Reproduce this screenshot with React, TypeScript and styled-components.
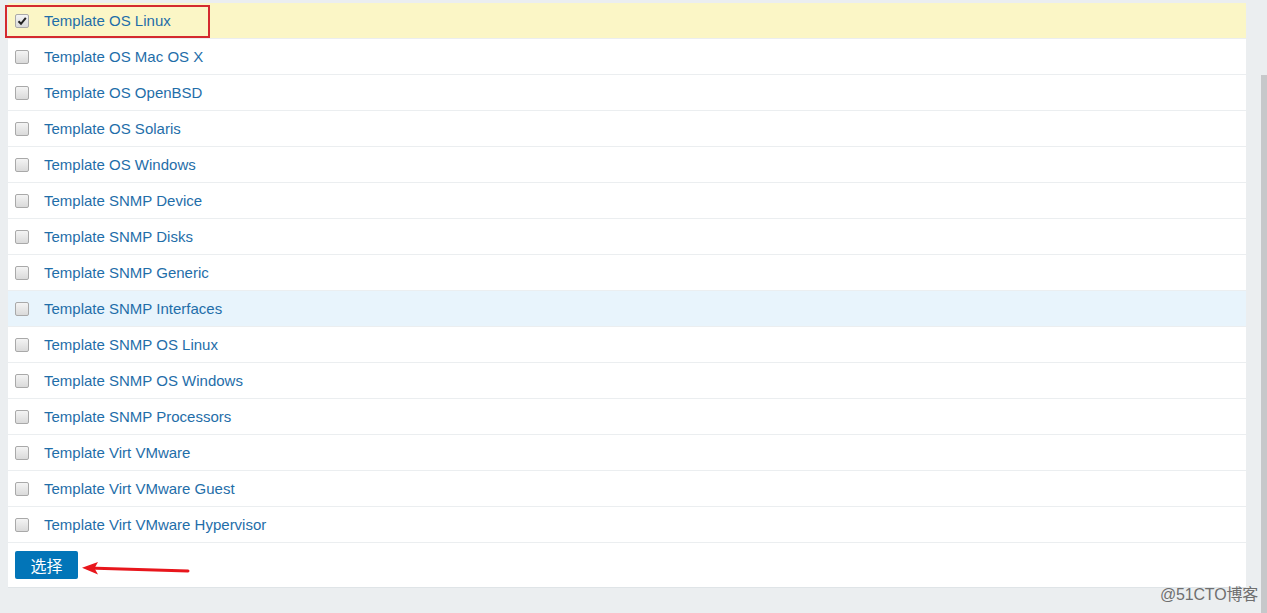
import React from "react";
import styled, { createGlobalStyle } from "styled-components";

const Global = createGlobalStyle`
  html, body { margin: 0; padding: 0; background: #ebeef0; }
  body { font-family: Arial, "Liberation Sans", "Noto Sans CJK SC", sans-serif; }
  #root { width: 1267px; height: 613px; overflow: hidden; }
`;

const Page = styled.div`
  display: flex;
  width: 1267px;
  height: 613px;
  background: #ebeef0;
  position: relative;
`;

const Main = styled.div`
  flex: 1;
  padding: 3px 0 0 8px;
`;

const Panel = styled.div`
  width: 1238px;
  background: #fff;
  border-bottom: 1px solid #dfe4e7;
`;

const Row = styled.div<{ $tone?: "selected" | "hover" }>`
  height: 35px;
  display: flex;
  align-items: center;
  border-bottom: 1px solid #ebeef0;
  background: ${(p) =>
    p.$tone === "selected" ? "#fbf6c6" : p.$tone === "hover" ? "#e8f4fc" : "#fff"};
  position: relative;
`;

const Box = styled.span<{ $checked?: boolean }>`
  width: 12px;
  height: 12px;
  margin-left: 7px;
  border: 1px solid #a9a9a9;
  border-radius: 2px;
  background: linear-gradient(#f4f4f4, #dadada);
  display: flex;
  align-items: center;
  justify-content: center;
  flex: none;
`;

const Label = styled.a`
  margin-left: 15px;
  font-size: 15px;
  color: #1f6ea9;
  text-decoration: none;
  line-height: 17px;
`;

const Highlight = styled.div`
  position: absolute;
  left: -3px;
  top: 2px;
  width: 201px;
  height: 29px;
  border: 2px solid #d42a2f;
  pointer-events: none;
`;

const Footer = styled.div`
  height: 44px;
  display: flex;
  align-items: center;
  padding-left: 7px;
  position: relative;
`;

const Button = styled.button`
  height: 28px;
  width: 63px;
  border: none;
  border-radius: 2px;
  background: #0275b8;
  color: #fff;
  font-size: 16px;
  font-family: "Noto Sans CJK SC", sans-serif;
  padding: 0;
  cursor: pointer;
`;

const Arrow = styled.svg`
  position: absolute;
  left: 70px;
  top: 18px;
`;

const ScrollTrack = styled.div`
  width: 21px;
  background: #ebeef0;
  display: flex;
  justify-content: flex-end;
`;

const Thumb = styled.div`
  width: 6px;
  margin-top: 75px;
  background: #c6c8ca;
`;

const Watermark = styled.div`
  position: absolute;
  right: 9px;
  bottom: 8px;
  font-size: 16px;
  color: #6f6f6f;
  font-family: "Liberation Sans", "Noto Sans CJK SC", sans-serif;
  letter-spacing: -0.2px;
`;

const items = [
  "Template OS Linux",
  "Template OS Mac OS X",
  "Template OS OpenBSD",
  "Template OS Solaris",
  "Template OS Windows",
  "Template SNMP Device",
  "Template SNMP Disks",
  "Template SNMP Generic",
  "Template SNMP Interfaces",
  "Template SNMP OS Linux",
  "Template SNMP OS Windows",
  "Template SNMP Processors",
  "Template Virt VMware",
  "Template Virt VMware Guest",
  "Template Virt VMware Hypervisor",
];

export default function App() {
  return (
    <>
      <Global />
      <Page>
        <Main>
          <Panel>
            {items.map((name, i) => (
              <Row key={name} $tone={i === 0 ? "selected" : i === 8 ? "hover" : undefined}>
                <Box $checked={i === 0}>
                  {i === 0 && (
                    <svg width="10" height="10" viewBox="0 0 10 10">
                      <path d="M1.5 5.2 L4 7.8 L8.8 1.8" fill="none" stroke="#222" strokeWidth="2" />
                    </svg>
                  )}
                </Box>
                <Label>{name}</Label>
                {i === 0 && <Highlight />}
              </Row>
            ))}
            <Footer>
              <Button>选择</Button>
              <Arrow width="120" height="16" viewBox="0 0 120 16">
                <path d="M10 7 L110 10" stroke="#e8161c" strokeWidth="3" strokeLinecap="round" />
                <path d="M4 6.8 L20 1 L16.5 7.2 L20 13.5 Z" fill="#e8161c" />
              </Arrow>
            </Footer>
          </Panel>
        </Main>
        <ScrollTrack>
          <Thumb />
        </ScrollTrack>
        <Watermark>@51CTO博客</Watermark>
      </Page>
    </>
  );
}
